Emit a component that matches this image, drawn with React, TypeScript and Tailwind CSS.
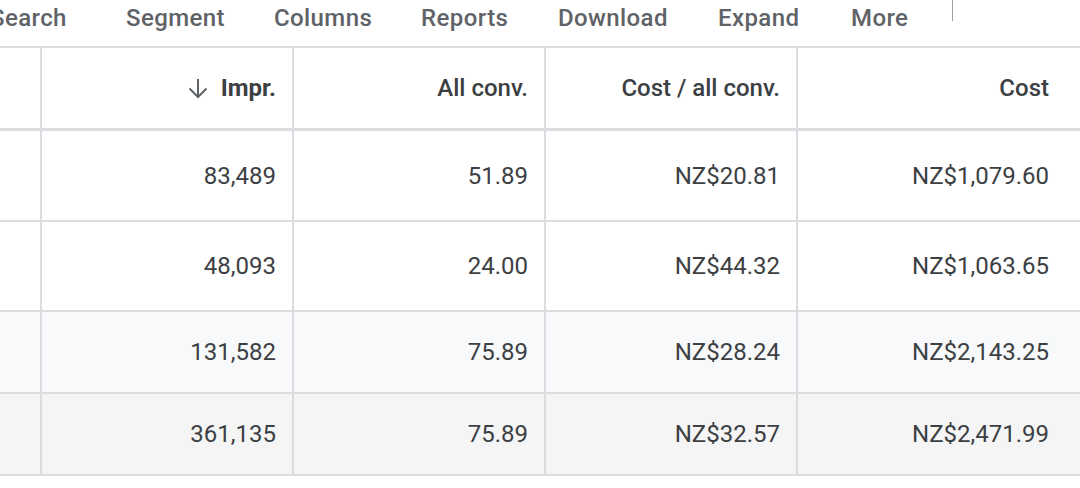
import React from "react";

const tools = [
  { label: "Search", w: "w-[136px]" },
  { label: "Segment", w: "w-[148px]" },
  { label: "Columns", w: "w-[147px]" },
  { label: "Reports", w: "w-[137px]" },
  { label: "Download", w: "w-[160px]" },
  { label: "Expand", w: "w-[133px]" },
  { label: "More", w: "w-[101px]" },
];

const rows = [
  { impr: "83,489", conv: "51.89", cpc: "NZ$20.81", cost: "NZ$1,079.60", bg: "bg-white", h: "h-[91px]" },
  { impr: "48,093", conv: "24.00", cpc: "NZ$44.32", cost: "NZ$1,063.65", bg: "bg-white", h: "h-[90px]" },
  { impr: "131,582", conv: "75.89", cpc: "NZ$28.24", cost: "NZ$2,143.25", bg: "bg-[#f8f9fa]", h: "h-[82px]" },
  { impr: "361,135", conv: "75.89", cpc: "NZ$32.57", cost: "NZ$2,471.99", bg: "bg-[#f5f5f6]", h: "h-[82px]" },
];

function ArrowDown() {
  return (
    <svg width="22" height="22" viewBox="0 0 22 22" fill="none" stroke="#5f6368" strokeWidth="2" className="mr-[12px]">
      <path d="M11 2v18M2.5 11.5L11 20l8.5-8.5" />
    </svg>
  );
}

export default function App() {
  return (
    <div className="w-[1080px] h-[488px] overflow-hidden bg-white text-[#3c4043]" style={{ fontFamily: "Roboto, 'Liberation Sans', sans-serif" }}>
      {/* toolbar */}
      <div className="h-[48px] border-b-2 border-[#dadce0] flex items-start">
        <div className="flex items-center h-[36px] -ml-[10px]">
          {tools.map((t) => (
            <div key={t.label} className={`${t.w} shrink-0 text-[24px] font-medium text-[#5f6368] tracking-[0.4px]`}>
              {t.label}
            </div>
          ))}
          <div className="w-px h-[21px] bg-[#9aa0a6] -mt-[15px]" />
        </div>
      </div>

      {/* header */}
      <div className="flex h-[83px] border-b-[3px] border-[#dadce0]">
        <div className="w-[42px] shrink-0 border-r-2 border-[#dadce0]" />
        <div className="w-[252px] shrink-0 border-r-2 border-[#dadce0] flex items-center justify-end pr-[16px] text-[24px] font-bold text-[#3c4043]">
          <ArrowDown />
          Impr.
        </div>
        <div className="w-[252px] shrink-0 border-r-2 border-[#dadce0] flex items-center justify-end pr-[16px] text-[24px] font-medium">
          All conv.
        </div>
        <div className="w-[252px] shrink-0 border-r-2 border-[#dadce0] flex items-center justify-end pr-[16px] text-[24px] font-medium">
          Cost / all conv.
        </div>
        <div className="w-[282px] shrink-0 flex items-center justify-end pr-[31px] text-[24px] font-medium">
          Cost
        </div>
      </div>

      {/* rows */}
      {rows.map((r, i) => (
        <div key={i} className={`flex ${r.h} ${r.bg} border-b-2 border-[#dadce0] text-[24px]`}>
          <div className="w-[42px] shrink-0 border-r-2 border-[#dadce0]" />
          <div className="w-[252px] shrink-0 border-r-2 border-[#dadce0] flex items-center justify-end pr-[16px]">{r.impr}</div>
          <div className="w-[252px] shrink-0 border-r-2 border-[#dadce0] flex items-center justify-end pr-[16px]">{r.conv}</div>
          <div className="w-[252px] shrink-0 border-r-2 border-[#dadce0] flex items-center justify-end pr-[16px]">{r.cpc}</div>
          <div className="w-[282px] shrink-0 flex items-center justify-end pr-[31px]">{r.cost}</div>
        </div>
      ))}
    </div>
  );
}
